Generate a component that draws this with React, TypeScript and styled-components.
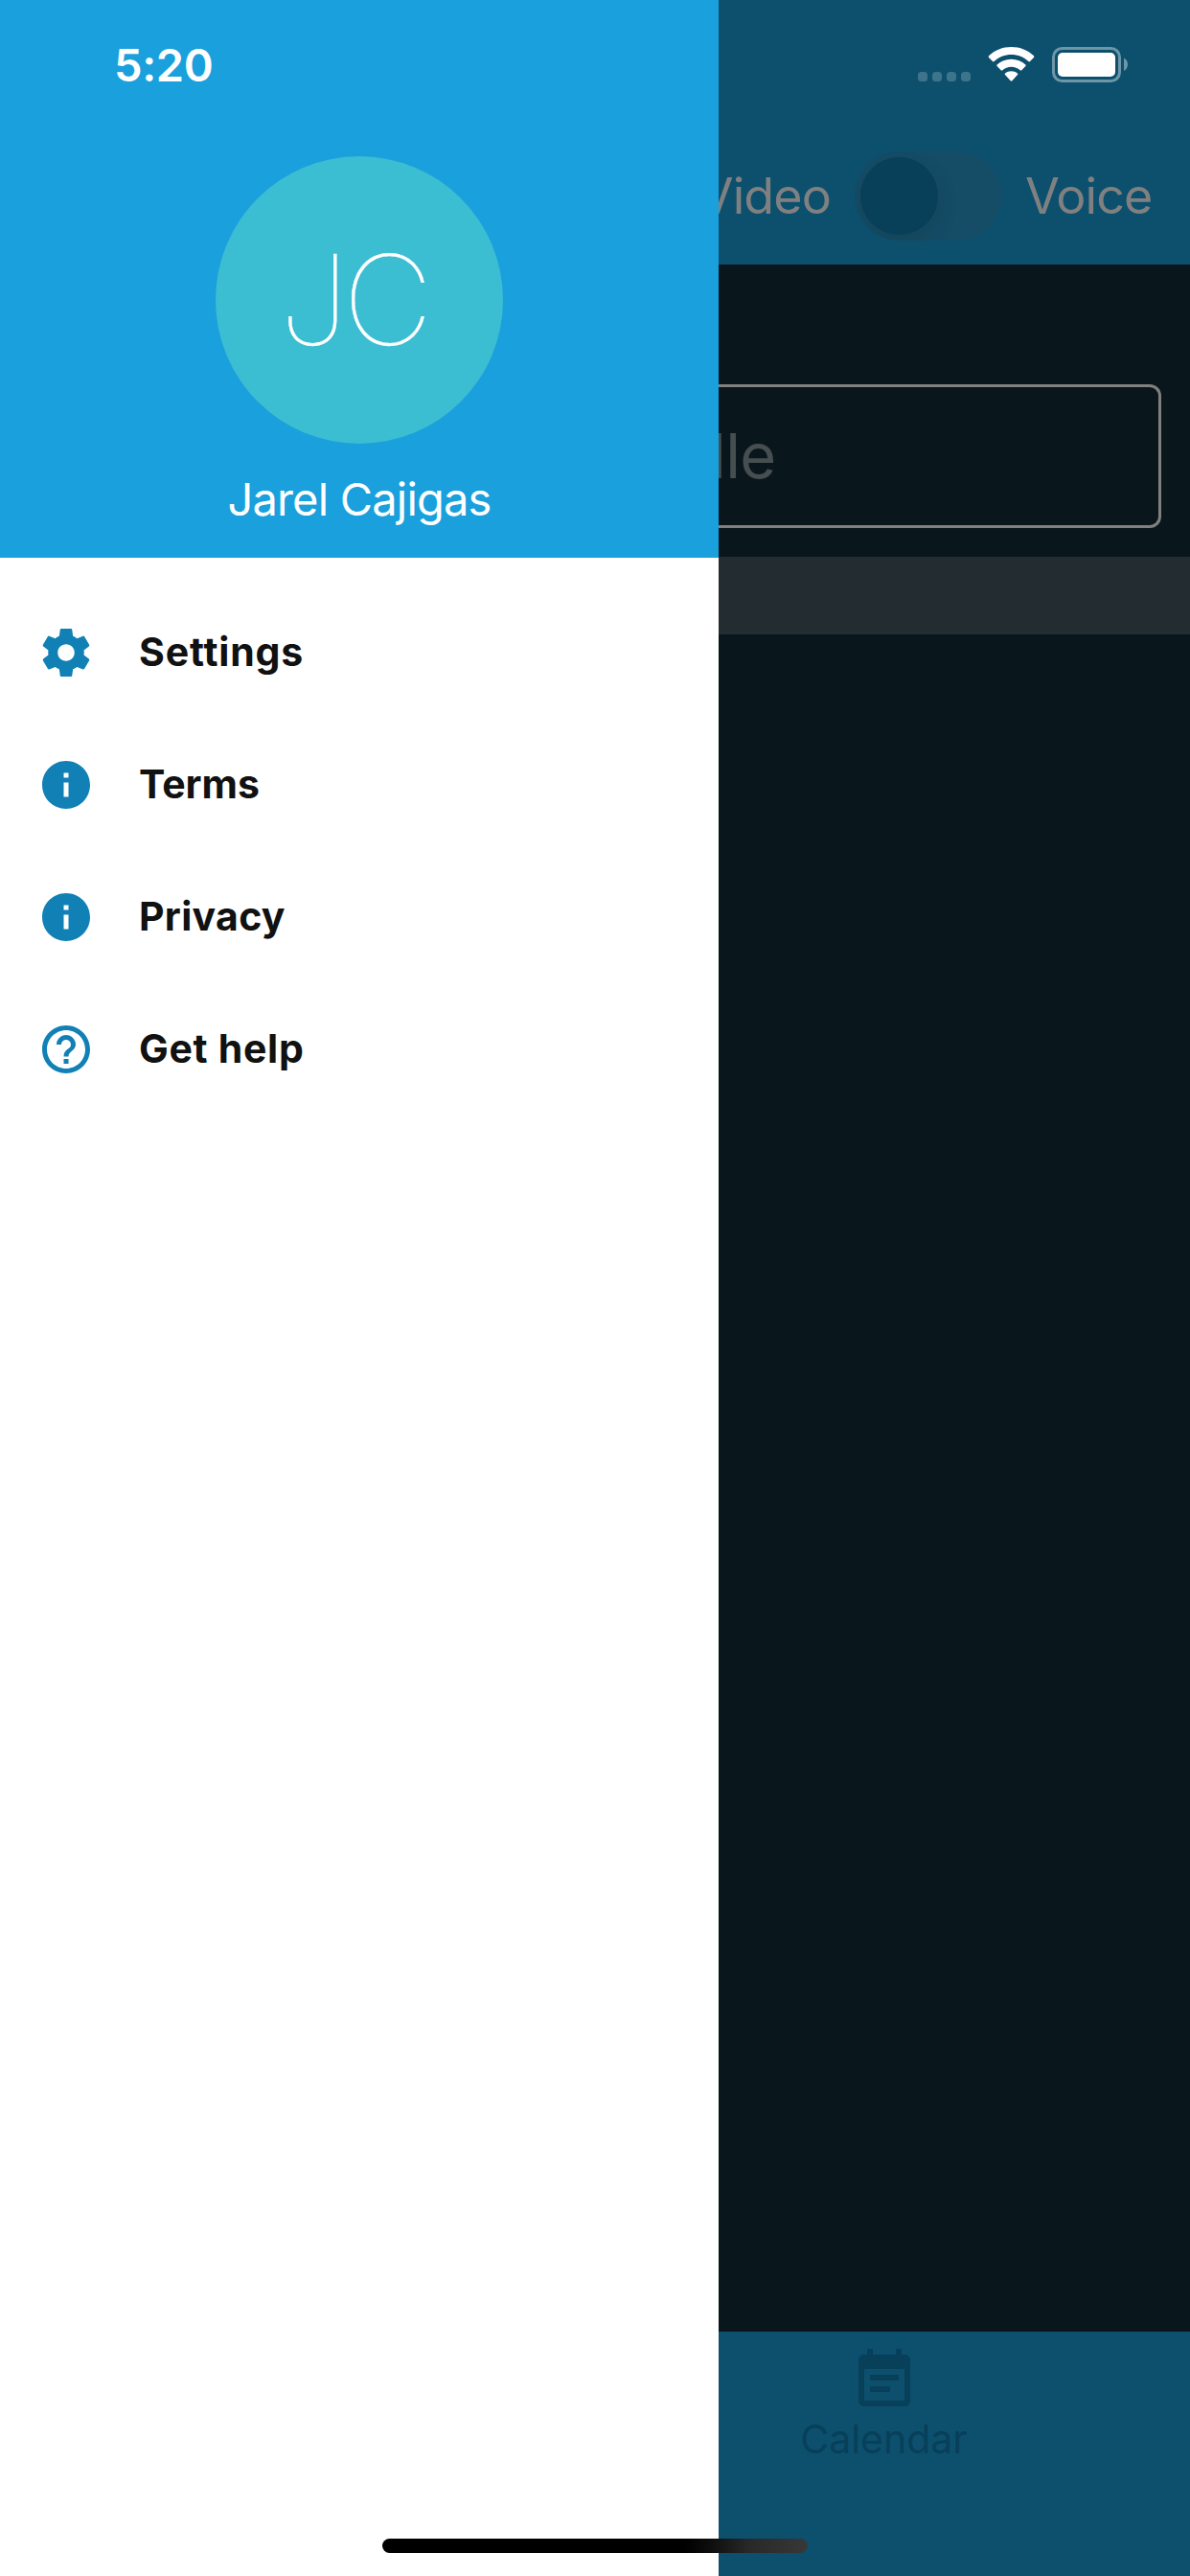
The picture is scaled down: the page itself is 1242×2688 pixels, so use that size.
import React from 'react';
import styled, { createGlobalStyle } from 'styled-components';
import { MdInfo, MdHelpOutline, MdEventNote } from 'react-icons/md';

const GlobalStyle = createGlobalStyle`
  * { box-sizing: border-box; }
  html, body { margin: 0; padding: 0; }
  body { font-family: Inter, "Liberation Sans", sans-serif; background: #fff; }
`;

const Screen = styled.div`
  position: relative;
  display: grid;
  grid-template-columns: 750px 492px;
  width: 1242px;
  height: 2688px;
  overflow: hidden;
`;

const Drawer = styled.aside`
  display: flex;
  flex-direction: column;
  background: #fff;
`;

const Profile = styled.header`
  display: flex;
  flex-direction: column;
  align-items: center;
  height: 582px;
  background: #1aa0dd;
  color: #fff;
`;

const Clock = styled.div`
  align-self: flex-start;
  height: 163px;
  padding: 38px 0 0 119px;
  font-size: 47px;
  font-weight: 600;
  line-height: 60px;
  letter-spacing: -0.4px;
`;

const Avatar = styled.div`
  display: flex;
  align-items: center;
  justify-content: center;
  width: 300px;
  height: 300px;
  padding-right: 13px;
  border-radius: 50%;
  background: #3bbdd2;
  font-size: 130px;
  font-weight: 140;
  line-height: 1;
  letter-spacing: -6px;
  -webkit-text-stroke: 0.4px #fff;
`;

const UserName = styled.div`
  margin-top: 29px;
  font-size: 47px;
  line-height: 58px;
  letter-spacing: -0.8px;
  white-space: nowrap;
`;

const Menu = styled.nav`
  display: flex;
  flex-direction: column;
  padding-top: 30px;
`;

const MenuItem = styled.a`
  display: flex;
  align-items: center;
  gap: 46px;
  height: 138px;
  padding-left: 39px;
  color: #1181b5;

  svg { width: 60px; height: 60px; flex: none; }
`;

const MenuLabel = styled.span<{ $spacing: number }>`
  padding-bottom: 2px;
  color: #111;
  font-size: 41px;
  font-weight: 700;
  line-height: 50px;
  letter-spacing: ${(p) => p.$spacing}px;
`;

const Backdrop = styled.main`
  display: flex;
  flex-direction: column;
  min-width: 0;
  overflow: hidden;
  background: #09161b;
`;

const TopBar = styled.header`
  height: 276px;
  background: #0c506e;
`;

const StatusIcons = styled.div`
  height: 140px;

  svg { display: block; }
`;

const CallMode = styled.div`
  display: flex;
  align-items: center;
  height: 129px;
  color: #808080;
  font-size: 52px;
  line-height: 64px;
  letter-spacing: -0.9px;
`;

const VideoLabel = styled.span`
  display: flex;
  justify-content: flex-end;
  width: 117px;
  white-space: nowrap;
`;

const Switch = styled.div`
  width: 153px;
  height: 93px;
  margin: 0 25px;
  padding: 6px;
  border-radius: 47px;
  background: #154c66;
  overflow: hidden;
`;

const Knob = styled.div`
  width: 81px;
  height: 81px;
  border-radius: 50%;
  background: #083f59;
  box-shadow: 0 9px 20px rgba(20, 50, 50, 0.22);
`;

const SearchArea = styled.section`
  height: 305px;
  padding-top: 125px;
`;

const Field = styled.div`
  display: flex;
  align-items: center;
  width: 462px;
  height: 150px;
  border: 3px solid #808080;
  border-left: 0;
  border-radius: 0 12px 12px 0;
  color: #464e51;
  font-size: 65px;
  line-height: 80px;
  letter-spacing: -0.6px;
`;

const FieldText = styled.span`
  margin-left: -8px;
`;

const Strip = styled.div`
  height: 81px;
  background: #222c31;
`;

const Body = styled.section`
  flex: 1;
`;

const TabBar = styled.footer`
  height: 255px;
  background: #0c506e;
`;

const Tab = styled.a`
  display: flex;
  flex-direction: column;
  align-items: center;
  width: 345px;
  padding-top: 15px;
  color: #083f59;
  font-size: 41px;
  line-height: 50px;

  svg { width: 72px; height: 72px; }
`;

const HomeIndicator = styled.div`
  position: absolute;
  left: 399px;
  bottom: 24px;
  width: 444px;
  height: 15px;
  border-radius: 8px;
  background: linear-gradient(90deg, #000 0 71%, #0d0d0d 77%, #282828 86%, #383838 100%);
`;

const GearIcon = () => (
  <svg viewBox="0 0 24 24" fill="currentColor">
    <path d="M19.43 12.98c.04-.32.07-.64.07-.98s-.03-.66-.07-.98l2.11-1.65c.19-.15.24-.42.12-.64l-2-3.46c-.12-.22-.39-.3-.61-.22l-2.49 1c-.52-.4-1.08-.73-1.69-.98l-.38-2.65C14.46 2.18 14.25 2 14 2h-4c-.25 0-.46.18-.49.42l-.38 2.65c-.61.25-1.17.59-1.69.98l-2.49-1c-.23-.09-.49 0-.61.22l-2 3.46c-.13.22-.07.49.12.64l2.11 1.65c-.04.32-.07.65-.07.98s.03.66.07.98l-2.11 1.65c-.19.15-.24.42-.12.64l2 3.46c.12.22.39.3.61.22l2.49-1c.52.4 1.08.73 1.69.98l.38 2.65c.03.24.24.42.49.42h4c.25 0 .46-.18.49-.42l.38-2.65c.61-.25 1.17-.59 1.69-.98l2.49 1c.23.09.49 0 .61-.22l2-3.46c.12-.22.07-.49-.12-.64l-2.11-1.65zM12 15.5c-1.93 0-3.5-1.57-3.5-3.5s1.57-3.5 3.5-3.5 3.5 1.57 3.5 3.5-1.57 3.5-3.5 3.5z" />
  </svg>
);

const StatusGlyphs = () => (
  <svg width="492" height="140" viewBox="750 0 492 140" fill="#fff">
    <g opacity="0.2">
      {[958, 973, 988, 1003].map((x) => (
        <rect key={x} x={x} y="75" width="10" height="10" rx="3.5" />
      ))}
    </g>
    <path d="M1055.500 49c9 0 17.300 3.300 23.500 9.300.5.500.5 1.100 0 1.600l-4 4.100c-.5.500-1.100.5-1.600 0-4.900-4.500-11.200-7-17.900-7s-13 2.500-17.900 7c-.5.500-1.100.5-1.600 0l-4-4.100c-.5-.5-.5-1.100 0-1.600 6.200-6 14.500-9.300 23.500-9.300z" />
    <path d="M1055.500 61.800c5.600 0 10.800 2.100 14.900 5.800.5.500.5 1 0 1.500l-4.100 4.200c-.5.500-1 .5-1.600 0a13.700 13.700 0 0 0-18.400 0c-.6.500-1.100.5-1.600 0l-4.100-4.200c-.5-.5-.5-1 0-1.500 4.100-3.700 9.300-5.800 14.900-5.800z" />
    <path d="M1055.500 74.300c2.400 0 4.600.8 6.400 2.300.6.500.6 1 .1 1.500l-5.700 6.200c-.5.500-1.100.5-1.600 0l-5.700-6.200c-.5-.5-.5-1 .1-1.500 1.800-1.500 4-2.300 6.400-2.300z" />
    <rect x="1099.500" y="50.500" width="69" height="34" rx="9" fill="none" stroke="#fff" strokeWidth="3" opacity="0.4" />
    <rect x="1104" y="55" width="60" height="25" rx="5" />
    <path d="M1173 60.500c5.300 2.500 5.300 11 0 13.500z" opacity="0.4" />
  </svg>
);

const items = [
  { label: 'Settings', icon: <GearIcon />, spacing: 0.85 },
  { label: 'Terms', icon: <MdInfo />, spacing: 0 },
  { label: 'Privacy', icon: <MdInfo />, spacing: 0.3 },
  { label: 'Get help', icon: <MdHelpOutline />, spacing: 0.7 },
];

export default function App() {
  return (
    <>
      <GlobalStyle />
      <Screen>
        <Drawer>
          <Profile>
            <Clock>5:20</Clock>
            <Avatar>JC</Avatar>
            <UserName>Jarel Cajigas</UserName>
          </Profile>
          <Menu>
            {items.map((item) => (
              <MenuItem key={item.label}>
                {item.icon}
                <MenuLabel $spacing={item.spacing}>{item.label}</MenuLabel>
              </MenuItem>
            ))}
          </Menu>
        </Drawer>
        <Backdrop>
          <TopBar>
            <StatusIcons>
              <StatusGlyphs />
            </StatusIcons>
            <CallMode>
              <VideoLabel>Video</VideoLabel>
              <Switch>
                <Knob />
              </Switch>
              <span>Voice</span>
            </CallMode>
          </TopBar>
          <SearchArea>
            <Field>
              <FieldText>lle</FieldText>
            </Field>
          </SearchArea>
          <Strip />
          <Body />
          <TabBar>
            <Tab>
              <MdEventNote />
              Calendar
            </Tab>
          </TabBar>
        </Backdrop>
        <HomeIndicator />
      </Screen>
    </>
  );
}
